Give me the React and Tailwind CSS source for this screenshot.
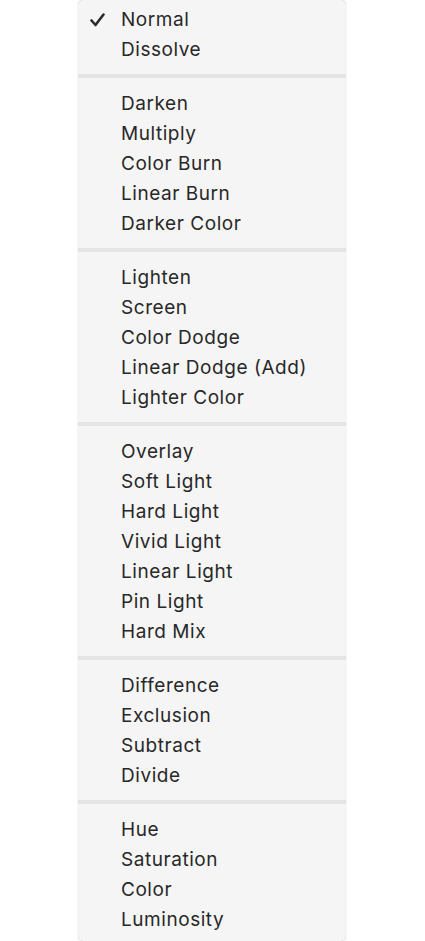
const groups = [
  ["Normal", "Dissolve"],
  ["Darken", "Multiply", "Color Burn", "Linear Burn", "Darker Color"],
  ["Lighten", "Screen", "Color Dodge", "Linear Dodge (Add)", "Lighter Color"],
  ["Overlay", "Soft Light", "Hard Light", "Vivid Light", "Linear Light", "Pin Light", "Hard Mix"],
  ["Difference", "Exclusion", "Subtract", "Divide"],
  ["Hue", "Saturation", "Color", "Luminosity"],
];

export default function App() {
  return (
    <div className="w-[425px] h-[941px] bg-white overflow-hidden" style={{ fontFamily: "Inter, 'Noto Sans', sans-serif" }}>
      <div className="ml-[78px] w-[268px] h-[941px] bg-[#f5f5f5] rounded-[5px] pt-[4px] shadow-[0_0_1px_rgba(0,0,0,0.35)]">
        {groups.map((g, gi) => (
          <div key={gi}>
            {gi > 0 && (
              <div className="h-[24px] flex items-center">
                <div className="w-full h-[4px] bg-[#e4e4e4]" />
              </div>
            )}
            {g.map((item) => (
              <div key={item} className="h-[30px] pt-[2px] flex items-center text-[19px] tracking-[0.55px] text-[#282828] relative pl-[43px]">
                {item === "Normal" && (
                  <svg className="absolute left-[12px] top-[9px]" width="15" height="14" viewBox="0 0 15 14">
                    <path d="M1.5 7.5 L5.5 12 L13.5 1.5" fill="none" stroke="#2b2b2b" strokeWidth="2.6" strokeLinecap="round" strokeLinejoin="round" />
                  </svg>
                )}
                {item}
              </div>
            ))}
          </div>
        ))}
      </div>
    </div>
  );
}
